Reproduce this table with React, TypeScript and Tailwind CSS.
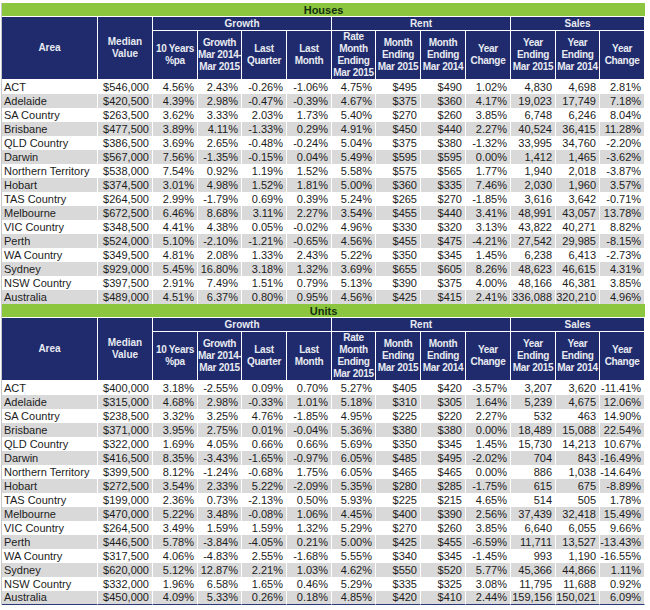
import React from "react";

type Row = [string, ...string[]];

const houses: Row[] = [
  ["ACT", "$546,000", "4.56%", "2.43%", "-0.26%", "-1.06%", "4.75%", "$495", "$490", "1.02%", "4,830", "4,698", "2.81%"],
  ["Adelaide", "$420,500", "4.39%", "2.98%", "-0.47%", "-0.39%", "4.67%", "$375", "$360", "4.17%", "19,023", "17,749", "7.18%"],
  ["SA Country", "$263,500", "3.62%", "3.33%", "2.03%", "1.73%", "5.40%", "$270", "$260", "3.85%", "6,748", "6,246", "8.04%"],
  ["Brisbane", "$477,500", "3.89%", "4.11%", "-1.33%", "0.29%", "4.91%", "$450", "$440", "2.27%", "40,524", "36,415", "11.28%"],
  ["QLD Country", "$386,500", "3.69%", "2.65%", "-0.48%", "-0.24%", "5.04%", "$375", "$380", "-1.32%", "33,995", "34,760", "-2.20%"],
  ["Darwin", "$567,000", "7.56%", "-1.35%", "-0.15%", "0.04%", "5.49%", "$595", "$595", "0.00%", "1,412", "1,465", "-3.62%"],
  ["Northern Territory", "$538,000", "7.54%", "0.92%", "1.19%", "1.52%", "5.58%", "$575", "$565", "1.77%", "1,940", "2,018", "-3.87%"],
  ["Hobart", "$374,500", "3.01%", "4.98%", "1.52%", "1.81%", "5.00%", "$360", "$335", "7.46%", "2,030", "1,960", "3.57%"],
  ["TAS Country", "$264,500", "2.99%", "-1.79%", "0.69%", "0.39%", "5.24%", "$265", "$270", "-1.85%", "3,616", "3,642", "-0.71%"],
  ["Melbourne", "$672,500", "6.46%", "8.68%", "3.11%", "2.27%", "3.54%", "$455", "$440", "3.41%", "48,991", "43,057", "13.78%"],
  ["VIC Country", "$348,500", "4.41%", "4.38%", "0.05%", "-0.02%", "4.96%", "$330", "$320", "3.13%", "43,822", "40,271", "8.82%"],
  ["Perth", "$524,000", "5.10%", "-2.10%", "-1.21%", "-0.65%", "4.56%", "$455", "$475", "-4.21%", "27,542", "29,985", "-8.15%"],
  ["WA Country", "$349,500", "4.81%", "2.08%", "1.33%", "2.43%", "5.22%", "$350", "$345", "1.45%", "6,238", "6,413", "-2.73%"],
  ["Sydney", "$929,000", "5.45%", "16.80%", "3.18%", "1.32%", "3.69%", "$655", "$605", "8.26%", "48,623", "46,615", "4.31%"],
  ["NSW Country", "$397,500", "2.91%", "7.49%", "1.51%", "0.79%", "5.13%", "$390", "$375", "4.00%", "48,166", "46,381", "3.85%"],
  ["Australia", "$489,000", "4.51%", "6.37%", "0.80%", "0.95%", "4.56%", "$425", "$415", "2.41%", "336,088", "320,210", "4.96%"],
];

const units: Row[] = [
  ["ACT", "$400,000", "3.18%", "-2.55%", "0.09%", "0.70%", "5.27%", "$405", "$420", "-3.57%", "3,207", "3,620", "-11.41%"],
  ["Adelaide", "$315,000", "4.68%", "2.98%", "-0.33%", "1.01%", "5.18%", "$310", "$305", "1.64%", "5,239", "4,675", "12.06%"],
  ["SA Country", "$238,500", "3.32%", "3.25%", "4.76%", "-1.85%", "4.95%", "$225", "$220", "2.27%", "532", "463", "14.90%"],
  ["Brisbane", "$371,000", "3.95%", "2.75%", "0.01%", "-0.04%", "5.36%", "$380", "$380", "0.00%", "18,489", "15,088", "22.54%"],
  ["QLD Country", "$322,000", "1.69%", "4.05%", "0.66%", "0.66%", "5.69%", "$350", "$345", "1.45%", "15,730", "14,213", "10.67%"],
  ["Darwin", "$416,500", "8.35%", "-3.43%", "-1.65%", "-0.97%", "6.05%", "$485", "$495", "-2.02%", "704", "843", "-16.49%"],
  ["Northern Territory", "$399,500", "8.12%", "-1.24%", "-0.68%", "1.75%", "6.05%", "$465", "$465", "0.00%", "886", "1,038", "-14.64%"],
  ["Hobart", "$272,500", "3.54%", "2.33%", "5.22%", "-2.09%", "5.35%", "$280", "$285", "-1.75%", "615", "675", "-8.89%"],
  ["TAS Country", "$199,000", "2.36%", "0.73%", "-2.13%", "0.50%", "5.93%", "$225", "$215", "4.65%", "514", "505", "1.78%"],
  ["Melbourne", "$470,000", "5.22%", "3.48%", "-0.08%", "1.06%", "4.45%", "$400", "$390", "2.56%", "37,439", "32,418", "15.49%"],
  ["VIC Country", "$264,500", "3.49%", "1.59%", "1.59%", "1.32%", "5.29%", "$270", "$260", "3.85%", "6,640", "6,055", "9.66%"],
  ["Perth", "$446,500", "5.78%", "-3.84%", "-4.05%", "0.21%", "5.00%", "$425", "$455", "-6.59%", "11,711", "13,527", "-13.43%"],
  ["WA Country", "$317,500", "4.06%", "-4.83%", "2.55%", "-1.68%", "5.55%", "$340", "$345", "-1.45%", "993", "1,190", "-16.55%"],
  ["Sydney", "$620,000", "5.12%", "12.87%", "2.21%", "1.03%", "4.62%", "$550", "$520", "5.77%", "45,366", "44,866", "1.11%"],
  ["NSW Country", "$332,000", "1.96%", "6.58%", "1.65%", "0.46%", "5.29%", "$335", "$325", "3.08%", "11,795", "11,688", "0.92%"],
  ["Australia", "$450,000", "4.09%", "5.33%", "0.26%", "0.18%", "4.85%", "$420", "$410", "2.44%", "159,156", "150,021", "6.09%"],
];

const subHeads: string[][] = [
  ["10 Years", "%pa"],
  ["Growth", "Mar 2014-", "Mar 2015"],
  ["Last", "Quarter"],
  ["Last", "Month"],
  ["Rate", "Month", "Ending", "Mar 2015"],
  ["Month", "Ending", "Mar 2015"],
  ["Month", "Ending", "Mar 2014"],
  ["Year", "Change"],
  ["Year", "Ending", "Mar 2015"],
  ["Year", "Ending", "Mar 2014"],
  ["Year", "Change"],
];

const widths = [96, 55, 45, 44, 45, 45, 44, 45, 45, 45, 45, 44, 45];

const th = "bg-[#1f2b6c] text-[#e8eaf2] font-bold text-[10px] leading-[12px] text-center border-r border-b border-white p-0";

function Section({ title, rows, last }: { title: string; rows: Row[]; last?: boolean }) {
  return (
    <tbody>
      <tr className="h-[14px]">
        <td
          colSpan={13}
          className="bg-[#8cc63e] text-[#12300f] font-bold text-[11px] leading-[12px] text-center border-b border-white p-0"
        >
          {title}
        </td>
      </tr>
      <tr className="h-[14px]">
        <th rowSpan={2} className={th}>
          Area
        </th>
        <th rowSpan={2} className={th}>
          Median
          <br />
          Value
        </th>
        <th colSpan={4} className={th}>
          Growth
        </th>
        <th colSpan={4} className={th}>
          Rent
        </th>
        <th colSpan={3} className={th}>
          Sales
        </th>
      </tr>
      <tr className="h-[48px]">
        {subHeads.map((lines, i) => (
          <th key={i} className={th + " whitespace-nowrap tracking-[-0.3px]"}>
            {lines.map((l, j) => (
              <div key={j}>{l}</div>
            ))}
          </th>
        ))}
      </tr>
      {rows.map((r, i) => (
        <tr key={r[0]} className={"h-[14px] " + (i % 2 === 1 ? "bg-[#d9d9d9]" : "bg-white")}>
          {r.map((c, j) => (
            <td
              key={j}
              className={
                "p-0 border-r border-white text-[11px] leading-[13px] text-[#1c1c1c] whitespace-nowrap " +
                (j === 0 ? "text-left pl-[2px]" : "text-right pr-[3px]") +
                (last && i === rows.length - 1 ? " border-b border-b-[#2a3978]" : "")
              }
            >
              {c}
            </td>
          ))}
        </tr>
      ))}
    </tbody>
  );
}

export default function App() {
  return (
    <div
      className="w-[650px] h-[610px] bg-white pt-[3px] overflow-hidden"
      style={{ fontFamily: '"Liberation Sans", Arial, sans-serif' }}
    >
      <table className="ml-[1px] w-[643px] table-fixed border-separate border-spacing-0 border-l border-l-[#c8c8c8]">
        <colgroup>
          {widths.map((w, i) => (
            <col key={i} style={{ width: w }} />
          ))}
        </colgroup>
        <Section title="Houses" rows={houses} />
        <Section title="Units" rows={units} last />
      </table>
    </div>
  );
}
